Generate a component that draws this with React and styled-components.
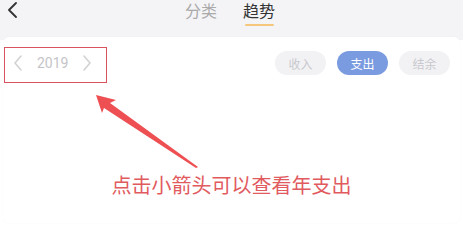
import React, { useState } from 'react';
import styled, { createGlobalStyle } from 'styled-components';

const GlobalStyle = createGlobalStyle`
  html, body {
    margin: 0;
    padding: 0;
    background: #fff;
    font-family: "Noto Sans CJK SC", "Noto Sans", sans-serif;
  }
`;

const Page = styled.div`
  width: 463px;
  height: 240px;
  background: #fff;
  position: relative;
  overflow: hidden;
`;

const TopBar = styled.div`
  background: #f4f4f7;
  height: 40px;
  display: flex;
  align-items: flex-start;
`;

const Back = styled.svg`
  margin: 2px 0 0 7px;
  flex-shrink: 0;
`;

const Tabs = styled.div`
  display: flex;
  gap: 26px;
  margin-left: 166px;
  padding-top: 0;
`;

const Tab = styled.div`
  font-size: 16px;
  line-height: 20px;
  color: ${(p) => (p.active ? '#333' : '#aaa')};
  display: flex;
  flex-direction: column;
  align-items: center;

  &::after {
    content: '';
    margin-top: 4px;
    width: 29px;
    height: 2px;
    border-radius: 1px;
    background: ${(p) => (p.active ? '#f5c77d' : 'transparent')};
  }
`;

const Card = styled.div`
  position: absolute;
  left: 3px;
  right: 3px;
  top: 37px;
  height: 186px;
  background: #fff;
  border-radius: 6px;
  box-shadow: 0 0 2px rgba(0, 0, 0, 0.04);
`;

const Controls = styled.div`
  display: flex;
  justify-content: space-between;
  align-items: center;
  padding: 14px 10px 0 8px;
`;

const YearPicker = styled.div`
  display: flex;
  align-items: center;
  gap: 14px;
  padding-left: 2px;
`;

const Chevron = styled.svg`
  cursor: pointer;
  display: block;
`;

const Year = styled.span`
  font-family: Roboto, sans-serif;
  font-size: 14px;
  color: #c4c4c8;
`;

const Pills = styled.div`
  display: flex;
  gap: 11px;
`;

const Pill = styled.button`
  width: 51px;
  height: 24px;
  border: none;
  border-radius: 12px;
  font-family: "Noto Sans CJK SC", sans-serif;
  font-size: 12px;
  padding: 0;
  background: ${(p) => (p.active ? '#7b9be1' : '#f2f2f5')};
  color: ${(p) => (p.active ? '#fff' : '#c9c9cd')};
`;

const Highlight = styled.div`
  position: absolute;
  left: 4px;
  top: 47px;
  width: 101px;
  height: 34px;
  border: 1.5px solid #d9535e;
  pointer-events: none;
`;

const Note = styled.div`
  position: absolute;
  left: 0;
  right: 0;
  top: 172px;
  text-align: center;
  color: #e15a5e;
  font-size: 20px;
  line-height: 26px;
  font-family: "Noto Sans CJK SC", sans-serif;
`;

const Pointer = styled.svg`
  position: absolute;
  left: 0;
  top: 0;
  pointer-events: none;
`;

const ChevronIcon = ({ dir, onClick }) => (
  <Chevron width="10" height="16" viewBox="0 0 10 16" onClick={onClick}>
    <path
      d={dir === 'left' ? 'M8 1 L2 8 L8 15' : 'M2 1 L8 8 L2 15'}
      fill="none"
      stroke="#d2d2d6"
      strokeWidth="1.6"
      strokeLinecap="round"
      strokeLinejoin="round"
    />
  </Chevron>
);

export default function App() {
  const [type, setType] = useState('支出');
  const [year, setYear] = useState(2019);

  return (
    <Page>
      <GlobalStyle />
      <TopBar>
        <Back width="12" height="16" viewBox="0 0 12 16">
          <path
            d="M9 1 L2 8 L9 15"
            fill="none"
            stroke="#333"
            strokeWidth="1.8"
            strokeLinecap="round"
            strokeLinejoin="round"
          />
        </Back>
        <Tabs>
          <Tab>分类</Tab>
          <Tab active>趋势</Tab>
        </Tabs>
      </TopBar>
      <Card>
        <Controls>
          <YearPicker>
            <ChevronIcon dir="left" onClick={() => setYear(year - 1)} />
            <Year>{year}</Year>
            <ChevronIcon dir="right" onClick={() => setYear(year + 1)} />
          </YearPicker>
          <Pills>
            {['收入', '支出', '结余'].map((t) => (
              <Pill key={t} active={t === type} onClick={() => setType(t)}>
                {t}
              </Pill>
            ))}
          </Pills>
        </Controls>
      </Card>
      <Highlight />
      <Pointer width="463" height="240">
        <polygon
          points="96,95 116,100 110,103 198,167 196,168 104,108 102,113"
          fill="#ee4f52"
        />
      </Pointer>
      <Note>点击小箭头可以查看年支出</Note>
    </Page>
  );
}
